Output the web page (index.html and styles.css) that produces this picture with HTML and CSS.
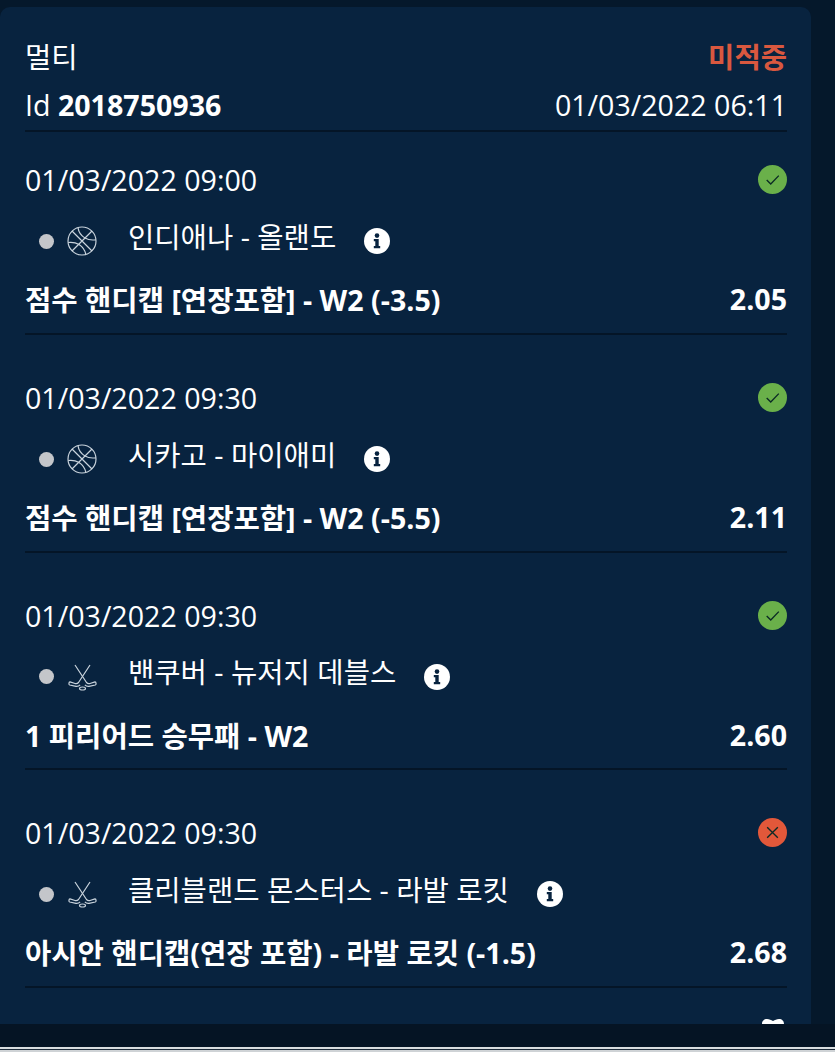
FILE: index.html
```html
<!DOCTYPE html>
<html lang="ko">
<head>
  <meta charset="UTF-8">
  <title>멀티</title>
  <link rel="stylesheet" href="styles.css">
</head>
<body>
<svg class="defs" width="0" height="0">
  <symbol id="ball" viewBox="0 0 30 30">
    <g fill="none" stroke="#c9d3dc" stroke-width="1.2">
      <circle cx="15" cy="15" r="14"/>
      <path d="M5 5l20 20M25 5L5 25"/>
      <path d="M11 1.600c.6 4.400 3 8 7 10.400 3 1.800 6.500 2.400 10.800 1.800"/>
      <path d="M1.200 16.500c4.300-.5 7.800.2 10.800 2 3.800 2.400 6 5.800 6.800 9.800"/>
    </g>
  </symbol>
  <symbol id="hockey" viewBox="0 0 30 30">
    <g fill="none" stroke="#c9d3dc" stroke-width="1.200" stroke-linejoin="round">
      <path d="M8 3l11.500 17.500c1 1.100 2 1.400 3.500 1l5-1.600c1.200.2 1.500 2.600.3 3.100l-6.300 1.300c-1.800.2-3.100-.3-4.100-1.500"/>
      <path d="M23 3L11.500 20.500c-1 1.100-2 1.400-3.500 1l-5-1.600c-1.200.2-1.500 2.600-.3 3.100L9 24.300c1.800.2 3.100-.3 4.100-1.500"/>
      <ellipse cx="15.500" cy="26.500" rx="3" ry="1.500"/>
    </g>
  </symbol>
  <symbol id="info" viewBox="0 0 26 26">
    <circle cx="13" cy="13" r="13" fill="#fff"/>
    <circle cx="13" cy="7.600" r="2.300" fill="#08233f"/>
    <path d="M9.800 11h4.900v7h1.500v2.200H9.800V18h1.500v-4.800H9.800z" fill="#08233f"/>
  </symbol>
</svg>

<div class="page">
  <div class="card">
    <div class="head">
      <div class="line type-line">
        <span>멀티</span>
        <span class="lost">미적중</span>
      </div>
      <div class="line">
        <span>Id <b>2018750936</b></span>
        <span>01/03/2022 06:11</span>
      </div>
    </div>

    <div class="bet">
      <div class="line">
        <span>01/03/2022 09:00</span>
        <span class="state ok"><svg viewBox="0 0 30 30"><path d="M9 15.500l4.200 4.200L21.500 11"/></svg></span>
      </div>
      <div class="match">
        <i class="dot"></i>
        <svg class="sport"><use href="#ball"/></svg>
        <span class="teams">인디애나 - 올랜도</span>
        <svg class="info"><use href="#info"/></svg>
      </div>
      <div class="line market">
        <span>점수 핸디캡 [연장포함] - W2 (-3.5)</span>
        <span>2.05</span>
      </div>
    </div>

    <div class="bet">
      <div class="line">
        <span>01/03/2022 09:30</span>
        <span class="state ok"><svg viewBox="0 0 30 30"><path d="M9 15.500l4.200 4.200L21.500 11"/></svg></span>
      </div>
      <div class="match">
        <i class="dot"></i>
        <svg class="sport"><use href="#ball"/></svg>
        <span class="teams">시카고 - 마이애미</span>
        <svg class="info"><use href="#info"/></svg>
      </div>
      <div class="line market">
        <span>점수 핸디캡 [연장포함] - W2 (-5.5)</span>
        <span>2.11</span>
      </div>
    </div>

    <div class="bet">
      <div class="line">
        <span>01/03/2022 09:30</span>
        <span class="state ok"><svg viewBox="0 0 30 30"><path d="M9 15.500l4.200 4.200L21.500 11"/></svg></span>
      </div>
      <div class="match">
        <i class="dot"></i>
        <svg class="sport"><use href="#hockey"/></svg>
        <span class="teams">밴쿠버 - 뉴저지 데블스</span>
        <svg class="info"><use href="#info"/></svg>
      </div>
      <div class="line market">
        <span>1 피리어드 승무패 - W2</span>
        <span>2.60</span>
      </div>
    </div>

    <div class="bet">
      <div class="line">
        <span>01/03/2022 09:30</span>
        <span class="state bad"><svg viewBox="0 0 30 30"><path d="M9.500 9.500l11 11M20.500 9.500l-11 11"/></svg></span>
      </div>
      <div class="match">
        <i class="dot"></i>
        <svg class="sport"><use href="#hockey"/></svg>
        <span class="teams">클리블랜드 몬스터스 - 라발 로킷</span>
        <svg class="info"><use href="#info"/></svg>
      </div>
      <div class="line market">
        <span>아시안 핸디캡(연장 포함) - 라발 로킷 (-1.5)</span>
        <span>2.68</span>
      </div>
    </div>

    <!-- next row is cut off by the card, only the top of its mark shows -->
    <div class="next">
      <svg viewBox="0 0 22 6"><path d="M0 6c0-3 2-5 5-5 2.500 0 4 1 6 2 2-1 3.500-2 6-2 3 0 5 2 5 5z" fill="#fff"/></svg>
    </div>
  </div>
  <div class="strip"></div>
  <div class="edge"></div>
</div>
</body>
</html>
```

FILE: styles.css
```css
* {
  box-sizing: border-box;
}
html, body {
  margin: 0;
  height: 1052px;
  overflow: hidden;
}
body {
  background: #05182b;
  color: #fff;
  font-family: "Open Sans", "Noto Sans CJK KR", sans-serif;
  font-size: 28.6px;
}
.defs {
  position: absolute;
}
.page {
  height: 1052px;
  padding-top: 7px;
  display: flex;
  flex-direction: column;
}
.card {
  width: 811px;
  height: 1017px;
  flex: none;
  overflow: hidden;
  background: #08233f;
  border-radius: 10px 10px 0 0;
  padding: 0 24px 0 25px;
}
.strip {
  height: 23px;
  flex: none;
  background: #051424;
}
.edge {
  height: 5px;
  flex: none;
  background: linear-gradient(#d9dde0 0, #d9dde0 2px, #1c2a38 2px, #1c2a38 3px, #cfd3d6 3px);
}
.line {
  display: flex;
  justify-content: space-between;
  align-items: center;
  height: 37px;
}
.head {
  padding-top: 30px;
  height: 125px;
  border-bottom: 2px solid #041527;
}
.type-line {
  margin-bottom: 12px;
}
.lost {
  color: #d9583f;
  font-weight: 700;
}
b {
  font-weight: 700;
}
.bet {
  height: 217.5px;
  padding-top: 44px;
  border-bottom: 2px solid #041527;
}
.bet:nth-child(2) {
  height: 203px;
  padding-top: 29px;
}
.state {
  width: 29px;
  height: 29px;
  border-radius: 50%;
  display: flex;
}
.state svg {
  width: 29px;
  height: 29px;
  fill: none;
  stroke: #0b2a25;
  stroke-width: 1.4;
}
.ok {
  background: #6ab04a;
}
.bad {
  background: #e2583a;
}
.match {
  display: flex;
  align-items: center;
  height: 40px;
  margin-top: 23px;
  padding-left: 14px;
}
.dot {
  width: 15px;
  height: 15px;
  border-radius: 50%;
  background: #c4c6ca;
}
.sport {
  width: 30px;
  height: 30px;
  margin-left: 13px;
}
.teams {
  margin-left: 31px;
  margin-bottom: 12px;
}
.info {
  width: 26px;
  height: 26px;
  margin-left: 28px;
}
.market {
  margin-top: 19px;
  font-weight: 700;
}
.next {
  display: flex;
  justify-content: flex-end;
  padding: 30px 3px 0 0;
}
.next svg {
  width: 22px;
  height: 6px;
}
```
